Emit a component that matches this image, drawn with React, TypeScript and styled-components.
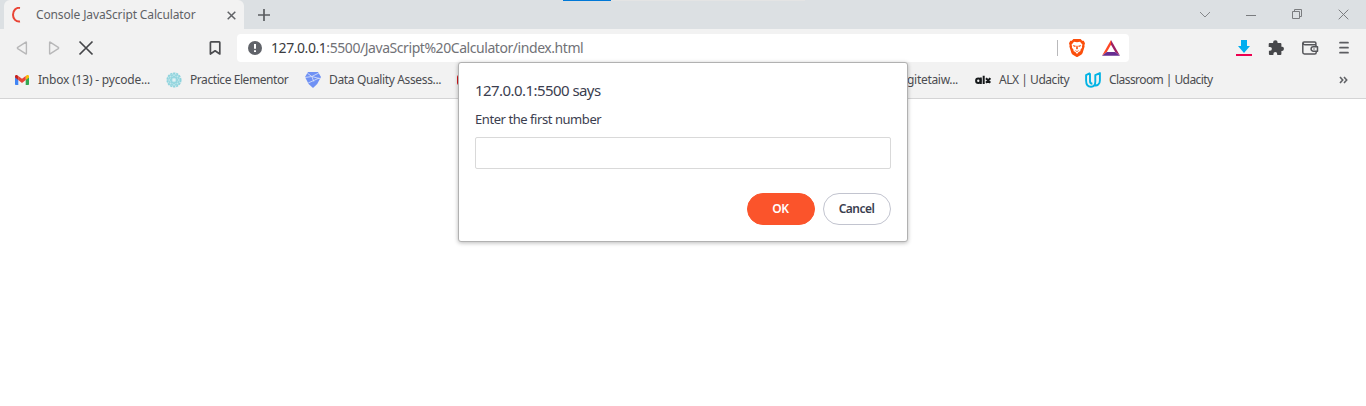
import React from 'react';
import styled, { createGlobalStyle } from 'styled-components';

const GlobalStyle = createGlobalStyle`
  * { box-sizing: border-box; }
  body { margin: 0; background: #fff; font-family: 'Noto Sans', 'Open Sans', sans-serif; overflow: hidden; }
  svg { display: block; flex: none; }
`;

const Window = styled.div`
  position: relative;
  width: 1366px;
  height: 406px;
  background: #fff;
`;

const TabStrip = styled.header`
  position: relative;
  display: flex;
  height: 29px;
  padding-left: 4px;
  background: #dce0e3;
`;

const LoadBar = styled.div`
  position: absolute;
  top: 0;
  left: 563px;
  width: 242px;
  height: 1px;
  background: linear-gradient(to right, #0078d7 48px, #e4e4e4 48px);
`;

const Tab = styled.div`
  display: flex;
  align-items: center;
  width: 240px;
  padding: 1px 8px 0 7px;
  border-radius: 6px 6px 0 0;
  background: #f2f2f2;
`;

const Text = styled.span<{ $size?: number; $track?: number; $color?: string; $weight?: number }>`
  font-size: ${p => p.$size ?? 12}px;
  letter-spacing: ${p => p.$track ?? 0}px;
  color: ${p => p.$color ?? '#4b4c50'};
  font-weight: ${p => p.$weight ?? 400};
  line-height: 18px;
  white-space: nowrap;
`;

const TabTitle = styled(Text)`
  flex: 1;
  margin-left: 9px;
`;

const NewTab = styled.div`
  padding: 9px 0 0 14px;
`;

const WindowControls = styled.div`
  display: flex;
  align-items: center;
  gap: 30px;
  margin-left: auto;
  padding-right: 17px;
`;

const Toolbar = styled.nav`
  display: flex;
  align-items: center;
  height: 37px;
  padding: 1px 14px 0 14px;
  background: #f2f2f2;
`;

const NavButtons = styled.div`
  display: flex;
  gap: 16px;
  width: 193px;
`;

const AddressBar = styled.div`
  display: flex;
  align-items: center;
  width: 892px;
  height: 28px;
  margin-left: 14px;
  padding: 0 9px 0 10px;
  border-radius: 4px;
  background: #fff;
`;

const Url = styled(Text)`
  flex: 1;
  margin-left: 8px;
`;

const Host = styled.span`
  color: #3b3c40;
`;

const Divider = styled.div`
  width: 1px;
  height: 16px;
  margin-right: 11px;
  background: #b9b9bb;
`;

const Badges = styled.div`
  display: flex;
  align-items: center;
  gap: 17px;
`;

const Actions = styled.div`
  display: flex;
  align-items: center;
  gap: 13px;
  margin-left: auto;
`;

const BookmarkBar = styled.div`
  display: flex;
  align-items: center;
  height: 33px;
  padding: 0 18px 4px 14px;
  border-bottom: 1px solid #d4d4d5;
  background: #f2f2f2;
`;

const Bookmark = styled.div<{ $width: number }>`
  display: flex;
  align-items: center;
  gap: 8px;
  flex: none;
  width: ${p => p.$width}px;
`;

const RedMark = styled.div`
  width: 16px;
  height: 10px;
  border-radius: 2px;
  background: #d9171c;
`;

const More = styled.div`
  margin-left: auto;
`;

const Dialog = styled.section`
  position: absolute;
  top: 62px;
  left: 458px;
  display: flex;
  flex-direction: column;
  width: 450px;
  height: 180px;
  padding: 18px 16px 16px;
  border: 1px solid #b1b1b1;
  border-radius: 3px;
  background: #fff;
  box-shadow: 0 1px 4px rgba(0, 0, 0, 0.28);
`;

const Message = styled(Text)`
  margin: 11px 0 9px;
`;

const Input = styled.input`
  width: 416px;
  height: 32px;
  padding: 0 8px;
  border: 1px solid #d9d9d9;
  border-radius: 2px;
  background: #fff;
  outline: none;
`;

const Buttons = styled.div`
  display: flex;
  justify-content: flex-end;
  gap: 8px;
  margin-top: 24px;
`;

const Button = styled.button<{ $primary?: boolean }>`
  width: 68px;
  height: 32px;
  padding: 0 1px 1px 0;
  border: 1px solid ${p => (p.$primary ? '#fb542b' : '#c2c4cf')};
  border-radius: 16px;
  background: ${p => (p.$primary ? '#fb542b' : '#fff')};
  color: ${p => (p.$primary ? '#fff' : '#3b3e4f')};
  font: 600 12px/18px 'Noto Sans', sans-serif;
  letter-spacing: ${p => (p.$primary ? -0.4 : -0.55)}px;
`;

const Cross = ({ size, width, color }: { size: number; width: number; color: string }) => (
  <svg width={size} height={size} viewBox={`0 0 ${size} ${size}`} stroke={color} strokeWidth={width}>
    <path d={`M.7 .7 ${size - 0.7} ${size - 0.7}M${size - 0.7} .7 .7 ${size - 0.7}`} />
  </svg>
);

const Triangle = ({ flip }: { flip?: boolean }) => (
  <svg width="16" height="16" viewBox="0 0 16 16" fill="none" stroke="#b8b8b9" strokeWidth="1.4" strokeLinejoin="round">
    <path d={flip ? 'M3.6 2.4v11.2q0 .6.5.3l8.2-5.3q.7-.6 0-1.2L4.1 2.1q-.5-.3-.5.3z' : 'M12.4 2.4v11.2q0 .6-.5.3L3.7 8.6q-.7-.6 0-1.2l8.2-5.3q.5-.3.5.3z'} />
  </svg>
);

const Gmail = () => (
  <svg width="16" height="16" viewBox="0 0 16 16">
    <path d="M1 5v7.2q0 .8.8.8h2.5V7.2z" fill="#4285f4" />
    <path d="M11.7 7.2V13h2.5q.8 0 .8-.8V5z" fill="#34a853" />
    <path d="M11.7 4v4.1L15 5.6V4.4C15 3 13.8 2.5 12.7 3.3z" fill="#fbbc04" />
    <path d="M4.3 8.1V4L8 6.8 11.7 4v4.1L8 10.9z" fill="#ea4335" />
    <path d="M1 4.4v1.2l3.3 2.5V4l-1-.7C2.2 2.5 1 3 1 4.4z" fill="#c5221f" />
  </svg>
);

const Rosette = () => (
  <svg width="16" height="16" viewBox="0 0 16 16" fill="none" stroke="#8ed3dd">
    <circle cx="8" cy="8" r="6.8" fill="#c3e7ec" strokeWidth="1.5" strokeDasharray="2.2 .9" />
    {[0, 45, 90, 135].map(a => (
      <ellipse key={a} cx="8" cy="8" rx="6.2" ry="2.7" strokeWidth=".8" transform={`rotate(${a} 8 8)`} />
    ))}
    <circle cx="8" cy="8" r="1.3" fill="#e0f1f4" stroke="none" />
  </svg>
);

const Gem = () => (
  <svg width="16" height="16" viewBox="0 0 16 16">
    <path d="M3 0h10l3 5-3.8 7L8 16l-4.4-4L0 5z" fill="#6f91f4" />
    <path d="M2.4 1.2 6.8 4.5 13.8 1M0 5.5l6.8-1 8.2 2.2M6.8 4.5l2 5M3.2 11l11-5" stroke="#dfe6f8" strokeWidth=".8" fill="none" />
  </svg>
);

const Brave = () => (
  <svg width="16" height="18" viewBox="0 0 16 18">
    <path d="M4.4 0h7.2l1.6 1.8 1.5-.1L16 4.2l-.6 2.1.2 1.2-2 6.4q-.5 1.2-1.4 1.8L8.8 17.7q-.8.5-1.6 0l-3.4-2q-.9-.6-1.4-1.8L.4 7.5l.2-1.2L0 4.2l1.3-2.5 1.5.1z" fill="#fb4e0b" />
    <path d="m5 2.7 3 .5 3-.5 2.5 3-.6 1.5.2 1.2-1.8 2.6.3 1.1-2 1L8 15l-1.6-1.9-2-1 .3-1.1-1.8-2.6.2-1.2-.6-1.5z" fill="#fff" />
    <path d="m3.8 6 3 .8-.5 1.3-1.6-.5zm8.4 0-3 .8.5 1.3 1.6-.5zM7.4 6.7h1.2l.3 3-.9.9-.9-.9zM5.7 11 8 11.9l2.3-.9-1 1.1L8 13l-1.3-.9z" fill="#fb4e0b" />
  </svg>
);

const Bat = () => (
  <svg width="18" height="16" viewBox="0 0 18 16">
    <path d="M9 0v4.7L4.8 12 0 15.7z" fill="#ff4724" />
    <path d="m9 0 9 15.7-4.8-3.7L9 4.7z" fill="#9e1f63" />
    <path d="M0 15.7 4.8 12h8.4l4.8 3.7z" fill="#662d91" />
  </svg>
);

const Udacity = () => (
  <svg width="16" height="16" viewBox="0 0 16 16" fill="none" stroke="#02b3e4" strokeWidth="1.9" strokeLinejoin="round">
    <path d="M5 1.2 1.1 3.1v5.5c0 3.8 1.8 6.2 4.9 6.2 2.9 0 4.3-1.8 4.3-5V3.1l4.6-2v7.4c0 3.5-2.4 5.8-5.8 4.8M5 1.2v8.1c0 1.4.8 2.4 2.4 2.5" />
  </svg>
);

// Geometric wordmark: round bowl, stem and cross
const Alx = () => (
  <svg width="16" height="10" viewBox="0 0 16 10" fill="none" stroke="#16191b" strokeWidth="2">
    <circle cx="3.3" cy="5.7" r="2.2" />
    <path d="M5.8 2.6v6.3M8.7 .7v8.2M11 3.2l4.3 4.5M15.3 3.2 11 7.7" />
  </svg>
);

export default function App() {
  return (
    <Window>
      <GlobalStyle />
      <TabStrip>
        <LoadBar />
        <Tab>
          <svg width="16" height="16" viewBox="0 0 16 16" fill="none" stroke="#e94435" strokeWidth="2">
            <path d="M9 .9C5 .3 2 3.5 2 7.7s3 7.4 7 6.8" />
          </svg>
          <TabTitle $color="#606266" $track={-0.13}>Console JavaScript Calculator</TabTitle>
          <Cross size={9} width={1.5} color="#606266" />
        </Tab>
        <NewTab>
          <svg width="12" height="12" viewBox="0 0 12 12" stroke="#5b5d61" strokeWidth="1.7"><path d="M6 0v12M0 6h12" /></svg>
        </NewTab>
        <WindowControls>
          <svg width="22" height="12" viewBox="0 0 22 12" fill="none" stroke="#85878a"><path d="m6 3 5 5 5-5" /></svg>
          <svg width="10" height="10" viewBox="0 0 10 10" stroke="#7a7c7f"><path d="M0 5.5h10" /></svg>
          <svg width="22" height="11" viewBox="0 0 22 11" fill="none" stroke="#7a7c7f"><path d="M6.5 2.5h7v7h-7zM8.5 2.5v-2h7v7h-2" /></svg>
          <Cross size={11} width={1} color="#7a7c7f" />
        </WindowControls>
      </TabStrip>
      <Toolbar>
        <NavButtons>
          <Triangle />
          <Triangle flip />
          <svg width="16" height="16" viewBox="0 0 16 16" stroke="#45464a" strokeWidth="1.7"><path d="m1.5 1.5 13 13m0-13-13 13" /></svg>
        </NavButtons>
        <svg width="16" height="16" viewBox="0 0 16 16" fill="none" stroke="#4c4d50" strokeWidth="1.7" strokeLinejoin="round">
          <path d="M4.1 1.9h8q.7 0 .7.7V14L8.1 10.8 3.4 14V2.6q0-.7.7-.7z" />
        </svg>
        <AddressBar>
          <svg width="16" height="16" viewBox="0 0 16 16">
            <circle cx="8" cy="8" r="7" fill="#606369" />
            <path d="M8 4v4.7M8 10.2v1.9" stroke="#fff" strokeWidth="2" />
          </svg>
          <Url $size={14} $track={-0.44} $color="#717277"><Host>127.0.0.1</Host>:5500/JavaScript%20Calculator/index.html</Url>
          <Divider />
          <Badges><Brave /><Bat /></Badges>
        </AddressBar>
        <Actions>
          <svg width="18" height="18" viewBox="0 0 18 18">
            <path d="M6 1h6v6h3L9 14 3 7h3z" fill="#00adef" />
            <path d="M1 15h16v2H1z" fill="#ed0050" />
          </svg>
          <svg width="20" height="18" viewBox="0 0 20 18" fill="#46474a">
            <path d="M3.7 4h3.5a2.2 2.2 0 1 1 4.3 0h2.9q1 0 1 1v2.8a2.1 2.1 0 1 1 0 4.1V15q0 1-1 1h-3.2v-1.1a1.9 1.9 0 0 0-3.8 0V16H3.9q-1 0-1-1v-3.3H4a1.9 1.9 0 0 0 0-3.8H2.7V5q0-1 1-1z" />
          </svg>
          <svg width="24" height="16" viewBox="0 0 24 16" fill="none" stroke="#55565a" strokeWidth="1.5" strokeLinejoin="round">
            <path d="M16.9 4.7V3.2q0-1.2-1.2-1.2H5.1Q3.8 2 3.8 3.3v9q0 1.7 1.7 1.7h10.2q1.5 0 1.5-1.5v-1.2M4 3.2q.2 1.5 1.8 1.5h9.9q1.5 0 1.5 1.4v.7M18.5 6.8h-4.2a2.2 2.2 0 0 0 0 4.4h4.2zM14.5 9h1" />
          </svg>
          <svg width="16" height="16" viewBox="0 0 16 16" stroke="#5c5d61" strokeWidth="1.7" strokeLinecap="round"><path d="M4 2.7h8M4 7.7h8M4 12.7h8" /></svg>
        </Actions>
      </Toolbar>
      <BookmarkBar>
        <Bookmark $width={152}><Gmail /><Text $track={-0.2}>Inbox (13) - pycode...</Text></Bookmark>
        <Bookmark $width={139}><Rosette /><Text $track={-0.43}>Practice Elementor</Text></Bookmark>
        <Bookmark $width={152}><Gem /><Text $track={-0.36}>Data Quality Assess...</Text></Bookmark>
        <Bookmark $width={450}><RedMark /></Bookmark>
        <Bookmark $width={68}><Text $track={-0.3}>gitetaiw...</Text></Bookmark>
        <Bookmark $width={110}><Alx /><Text $track={-0.46}>ALX | Udacity</Text></Bookmark>
        <Bookmark $width={150}><Udacity /><Text $track={-0.57}>Classroom | Udacity</Text></Bookmark>
        <More>
          <svg width="9" height="8" viewBox="0 0 9 8" fill="none" stroke="#606266" strokeWidth="1.6"><path d="m1 1 2.7 3L1 7M5 1l2.7 3L5 7" /></svg>
        </More>
      </BookmarkBar>
      <Dialog>
        <Text $size={15} $track={-0.56} $color="#3b3e4f">127.0.0.1:5500 says</Text>
        <Message $size={13} $track={-0.44} $color="#3b3e4f">Enter the first number</Message>
        <Input aria-label="Enter the first number" />
        <Buttons>
          <Button $primary>OK</Button>
          <Button>Cancel</Button>
        </Buttons>
      </Dialog>
    </Window>
  );
}
